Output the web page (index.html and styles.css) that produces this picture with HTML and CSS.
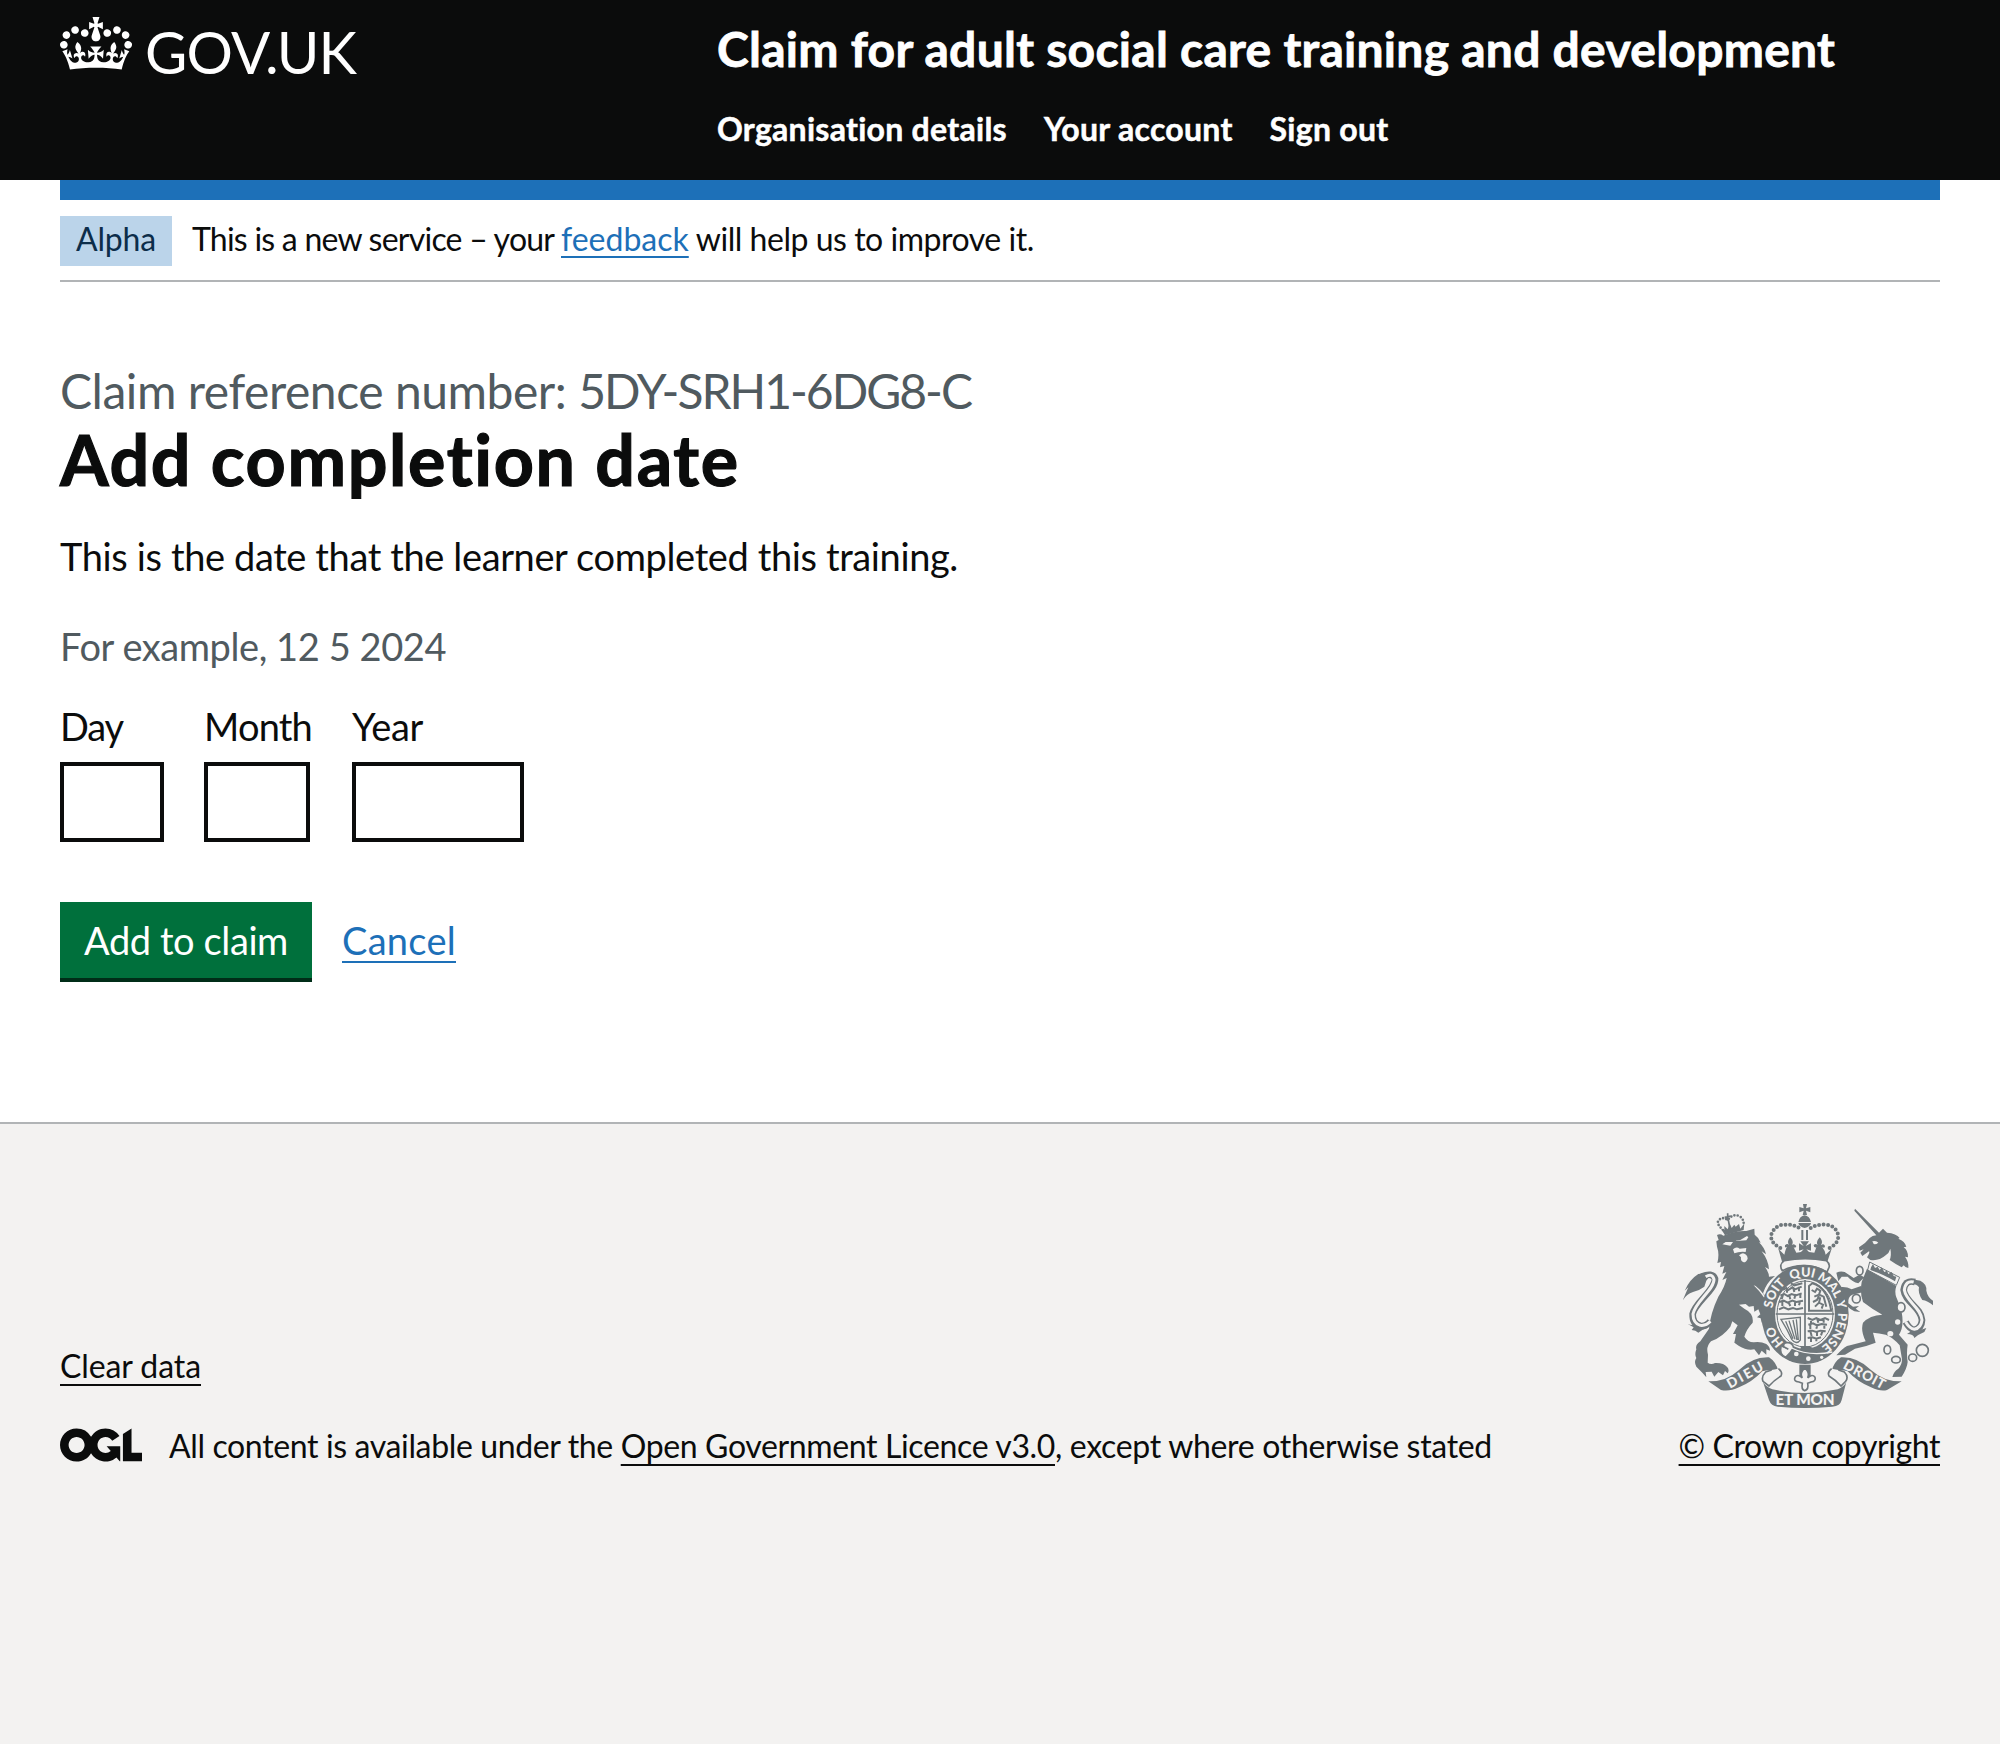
FILE: index.html
```html
<!DOCTYPE html>
<html lang="en">
<head>
<meta charset="utf-8">
<title>Add completion date</title>
<link rel="stylesheet" href="styles.css">
</head>
<body>
<header class="header">
  <div class="header-inner">
    <a class="logo" href="#">
      <svg class="crown" viewBox="0 0 132 97" aria-hidden="true"><path fill="currentColor" fill-rule="evenodd" d="M25 30.2c3.5 1.5 7.7-.2 9.1-3.7 1.5-3.6-.2-7.8-3.9-9.2-3.6-1.4-7.6.3-9.1 3.9-1.4 3.5.3 7.5 3.9 9zM9 39.5c3.6 1.5 7.8-.2 9.2-3.7 1.5-3.6-.2-7.8-3.9-9.1-3.6-1.5-7.6.2-9.1 3.8-1.4 3.5.3 7.5 3.8 9zM4.4 57.2c3.5 1.5 7.7-.2 9.1-3.8 1.5-3.6-.2-7.7-3.9-9.1-3.5-1.5-7.6.3-9.1 3.8-1.4 3.5.3 7.6 3.9 9.1zm38.3-21.4c3.5 1.5 7.7-.2 9.1-3.8 1.5-3.6-.2-7.7-3.9-9.1-3.6-1.5-7.6.3-9.1 3.8-1.3 3.6.4 7.7 3.9 9.1zm64.4-5.6c-3.6 1.5-7.8-.2-9.1-3.7-1.5-3.6.2-7.8 3.8-9.2 3.6-1.4 7.7.3 9.2 3.9 1.3 3.5-.4 7.5-3.9 9zm15.9 9.3c-3.6 1.5-7.7-.2-9.1-3.7-1.5-3.6.2-7.8 3.7-9.1 3.6-1.5 7.7.2 9.2 3.8 1.5 3.5-.3 7.5-3.8 9zm4.7 17.7c-3.6 1.5-7.8-.2-9.2-3.8-1.5-3.6.2-7.7 3.9-9.1 3.6-1.5 7.7.3 9.2 3.8 1.3 3.5-.4 7.6-3.9 9.1zM89.3 35.8c-3.6 1.5-7.8-.2-9.2-3.8-1.4-3.6.2-7.7 3.9-9.1 3.6-1.5 7.7.3 9.2 3.8 1.4 3.6-.3 7.7-3.9 9.1zM69.7 17.7l8.9 4.7V9.3l-8.9 2.8c-.2-.3-.5-.6-.9-.9L72.4 0H59.6l3.5 11.2c-.3.3-.6.5-.9.9l-8.8-2.8v13.1l8.8-4.7c.3.3.6.7.9.9l-5 15.4v.1c-.2.8-.4 1.6-.4 2.4 0 4.1 3.1 7.5 7 8.1h.2c.3 0 .7.1 1 .1.4 0 .7 0 1-.1h.2c4-.6 7.1-4.1 7.1-8.1 0-.8-.1-1.7-.4-2.4V34l-5.1-15.4c.4-.2.7-.6 1-.9zM66 92.8c16.9 0 32.8 1.1 47.1 3.2 4-16.9 8.9-26.7 14-33.5l-9.6-3.4c1 4.9 1.1 7.2 0 10.2-1.5-1.4-3-4.3-4.2-8.7L108.6 76c2.8-2 5-3.2 7.5-3.3-4.4 9.4-10 11.9-13.6 11.2-4.3-.8-6.3-4.6-5.6-7.9 1-4.7 5.7-5.9 8-.5 4.3-8.7-3-11.4-7.6-8.8 7.1-7.2 7.9-13.5 2.1-21.1-8 6.1-8.1 12.3-4.5 20.8-4.7-5.4-12.1-2.5-9.5 6.2 3.4-5.2 7.9-2 7.2 3.1-.6 4.3-6.4 7.8-13.5 7.2-10.3-.9-10.9-8-11.2-13.8 2.5-.5 7.1 1.8 11 7.3L80.2 60c-4.1 4.4-8 5.3-12.3 5.4 1.4-4.4 8-11.6 8-11.6H55.5s6.4 7.2 7.9 11.6c-4.2-.1-8-1-12.3-5.4l1.4 16.4c3.9-5.5 8.5-7.7 10.9-7.3-.3 5.8-.9 12.8-11.1 13.8-7.2.6-12.9-2.9-13.5-7.2-.7-5 3.8-8.3 7.1-3.1 2.7-8.7-4.6-11.6-9.4-6.2 3.7-8.5 3.6-14.7-4.6-20.8-5.8 7.6-5 13.9 2.2 21.1-4.7-2.6-11.9.1-7.7 8.8 2.3-5.5 7.1-4.2 8.1.5.7 3.3-1.3 7.1-5.7 7.9-3.5.7-9-1.8-13.5-11.2 2.5.1 4.7 1.3 7.5 3.3l-4.7-15.4c-1.2 4.4-2.7 7.2-4.3 8.7-1.1-3-.9-5.3 0-10.2l-9.5 3.4c5 6.9 9.9 16.7 14 33.5 14.8-2.1 30.8-3.2 47.7-3.2z"/></svg>
      <span class="logo-text">GOV.UK</span>
    </a>
    <div class="header-content">
      <a class="service-name" href="#">Claim for adult social care training and development</a>
      <nav class="nav">
        <a href="#">Organisation details</a>
        <a href="#">Your account</a>
        <a href="#">Sign out</a>
      </nav>
    </div>
  </div>
</header>
<div class="container">
  <div class="blue-bar"></div>
  <div class="phase">
    <strong class="tag">Alpha</strong>
    <span class="phase-text"><span class="phase-start">This is a new service – your </span><a class="link feedback" href="#">feedback</a><span class="phase-end"> will help us to improve it.</span></span>
  </div>
  <main class="main">
    <span class="caption"><span class="caption-label">Claim reference number: </span><span class="caption-code">5DY-SRH1-6DG8-C</span></span>
    <h1 class="heading">Add completion date</h1>
    <p class="body">This is the date that the learner completed this training.</p>
    <div class="hint">For example, 12 5 2024</div>
    <div class="date">
      <label class="field"><span class="label label-day">Day</span><input class="input input-2" type="text"></label>
      <label class="field field-month"><span class="label label-month">Month</span><input class="input input-month" type="text"></label>
      <label class="field"><span class="label label-year">Year</span><input class="input input-4" type="text"></label>
    </div>
    <div class="actions">
      <button class="button" type="button">Add to claim</button>
      <a class="link cancel" href="#">Cancel</a>
    </div>
  </main>
</div>
<footer class="footer">
  <div class="footer-inner">
    <div class="footer-meta">
      <div class="footer-links"><a class="footer-link" href="#">Clear data</a></div>
      <div class="licence">
        <svg class="ogl" viewBox="0 0 483.2 195.7" aria-hidden="true"><path fill="currentColor" d="M421.5 142.8V.1l-50.7 32.3v161.1h112.4v-50.7zm-122.3-9.6A47.12 47.12 0 0 1 221 97.8c0-26 21.1-47.1 47.1-47.1 16.7 0 31.4 8.7 39.7 21.8l42.7-27.2A97.63 97.63 0 0 0 268.1 0c-36.5 0-68.3 20.1-85.1 49.7A98 98 0 0 0 97.8 0C43.9 0 0 43.9 0 97.8s43.9 97.8 97.8 97.8c36.5 0 68.3-20.1 85.1-49.7a97.76 97.76 0 0 0 149.6 25.4l19.4 22.2h3v-87.8h-80l24.3 27.5zM97.8 145c-26 0-47.1-21.1-47.1-47.1s21.1-47.1 47.1-47.1 47.1 21.1 47.1 47.1S123.8 145 97.8 145"/></svg>
        <span class="licence-text">All content is available under the <a class="footer-link" href="#">Open Government Licence v3.0</a><span class="licence-end">, except where otherwise stated</span></span>
      </div>
    </div>
    <a class="copyright" href="#">
      <svg class="crest" viewBox="72 72 750 612" aria-hidden="true">
        <defs><path id="garter" d="M438 514A99 112 0 0 1 438 290A99 112 0 0 1 438 514" pathLength="100"/></defs>
        <!-- lion -->
        <g class="ink">
          <path d="M174 200L172 184L179 180L174 165Q184 160 193 167Q225 152 262 153L286 146L287 164Q299 172 305 188L300 187Q318 205 321 223L308 214Q328 240 330 268L318 261Q330 278 330 290L348 288Q322 308 312 340L340 368Q338 388 346 405L344 428L334 418L326 430L318 420L308 428L305 415L294 412L304 403L298 388L286 395L284 378L270 380L260 372L240 374L256 386Q285 400 281 428Q262 448 256 470Q268 488 285 487Q305 484 322 492Q333 500 333 512L322 508L322 524L308 512L300 526L286 508Q262 512 240 498L226 488L231 462L222 462L236 436L220 424L214 440Q192 470 156 484Q140 500 147 524L146 548Q156 556 168 549Q195 548 205 562Q212 570 206 580L198 573L192 586L178 576L166 590L158 575L140 576L142 592L130 578L112 560Q104 545 112 534Q106 524 112 508Q108 494 124 484L150 446Q154 400 178 350Q198 320 203 294L190 300L202 276L190 281L196 258L183 262L186 246L175 249Q182 222 174 200Z"/>
          <path d="M71 362Q80 340 88 322L77 332Q92 298 118 282L148 278Q154 292 142 302L136 320Q120 332 102 336Q82 342 71 362ZM86 432Q106 440 120 426Q136 436 152 426L146 444Q130 448 118 458Q110 450 98 450L104 442Z"/>
        </g>
        <path class="tube" d="M128 290Q160 276 168 296C170 330 108 366 101 402Q100 432 124 438Q142 440 154 424"/>
        <path class="tube-in" d="M140 290Q160 278 165 298C166 328 108 366 102 402Q102 430 124 436Q142 438 154 424"/>
        <g class="paper">
          <path d="M190 193L200 186L222 186L214 197ZM232 183L262 181L268 172L264 168L244 180L230 182ZM222 208Q232 198 242 206L262 204L260 216Q240 214 226 220ZM240 226Q248 220 252 220Q266 224 266 236Q262 247 254 247Q244 244 246 232Z"/>
          <path d="M284 316L290 318Q320 340 346 400L342 402Q318 348 284 316Z"/>
        </g>
        <!-- lion's crown -->
        <path class="ink" d="M186 146L198 166L254 150L256 130L244 146L240 132L230 140L226 134L218 144L212 130L206 148L196 138L196 150Z"/>
        <path class="dots small" d="M192 150Q172 132 178 122Q190 108 206 120Q222 100 240 108Q256 116 254 138"/>
        <path class="line" d="M206 100V122M197 112L215 108M208 120L212 142"/>
        <!-- central crown -->
        <g class="ink">
          <path d="M432 72H444L441 85L454 81V97L441 92L444 105H431L434 92L421 97V81L434 85ZM418 126Q422 108 437 106Q452 108 456 126ZM418 129H456Q454 140 437 144Q420 140 418 129Z"/>
          <path d="M358 206L376 224Q380 206 384 200Q376 206 378 196Q386 188 390 196Q382 184 394 172Q406 186 398 196Q404 188 412 198Q410 206 404 202L412 218L426 216L434 208L420 212V190L434 198L424 184H450L440 198L456 190V212L442 208L450 216L466 218L472 202Q464 204 464 196Q470 188 476 196Q470 186 482 172Q494 184 486 196Q494 188 498 198Q498 206 490 202Q498 212 500 224L518 206L504 248Q438 232 370 248Z"/>
          <path d="M427 150H433V180H427ZM441 150H447V180H441Z"/>
        </g>
        <path class="dots" d="M364 204Q330 186 338 160Q350 134 378 134Q404 132 428 148M512 204Q544 186 536 160Q526 134 496 134Q472 132 448 148"/>
        <path class="frame" d="M376 242Q438 230 502 242Q514 252 510 262L504 276Q438 240 370 272Q358 254 376 242Z"/>
        <!-- garter and shield -->
        <ellipse class="ink" cx="438" cy="403" rx="131" ry="149"/>
        <ellipse class="paper" cx="438" cy="402" rx="90" ry="105"/>
        <ellipse class="line thin" cx="438" cy="402" rx="84" ry="99"/>
        <path class="line" d="M438 300V505M350 402H526"/>
        <g class="charges">
          <path d="M372 330l10-6 6 6 12-8 8 6 20-8M384 326v12M402 322l4 14M420 320v14M364 346l12-4 10 6 12-6 12 4 18-6M372 344l-4 14M390 344l4 14M410 342l-4 14M424 342v12M360 366l14-4 12 6 14-6 12 4 20-4M370 364v14M388 366l6 12M408 362v16M424 362l-4 14M360 388l14-6 14 6 14-4 12 4 18-4M396 310l10 6 24-6"/>
          <path d="M446 414l14 6 12-6 12 6 14-6 12 6M456 416v14M474 414l4 14M494 416v12M448 434l14-4 12 6 14-4 16 2M454 434v14M476 432l-4 14M496 434v12M446 454l14-2 12 4 12-4 16 2M454 454l4 14M474 456v12M490 454l-4 12M446 474l14-2 12 4 14-4M456 474v12M472 474v10"/>
          <path d="M450 318L460 310Q504 322 516 388V392H450Z"/>
          <path d="M458 330L468 336L474 326L484 332L480 344L494 350L502 380M466 350L480 344M462 366L474 360L480 348M468 380L480 368L492 374L488 386M484 352L480 368"/>
          <path class="harp" d="M366 418L424 412V480Q412 496 398 478Q386 450 366 418ZM380 424L402 476M390 422L408 478M402 420L414 480M412 418L418 480"/>
        </g>
        <path class="ink" d="M426 498H450L466 506 444 514 424 512Z"/>
        <g class="motto garter-text">
          <text><textPath href="#garter" startOffset="10.5">HO</textPath></text>
          <text><textPath href="#garter" startOffset="27.5">SOIT</textPath></text>
          <text><textPath href="#garter" startOffset="43.5">QUI</textPath></text>
          <text><textPath href="#garter" startOffset="55.5">MAL</textPath></text>
          <text><textPath href="#garter" startOffset="69">Y</textPath></text>
          <text><textPath href="#garter" startOffset="74.5">PENSE</textPath></text>
        </g>
        <path class="frame" d="M366 500Q360 524 380 532Q394 520 404 502Q398 486 384 488Q372 488 374 500L388 508"/>
        <path class="gap" d="M398 504Q450 530 520 516"/>
        <circle class="paper" cx="412" cy="522" r="7"/><circle class="paper" cx="448" cy="536" r="7"/><circle class="paper" cx="488" cy="532" r="5"/>
        <!-- unicorn -->
        <g class="ink">
          <path d="M588 86L660 158L672 146L684 158Q712 160 722 174L718 176Q738 184 742 200L734 202Q748 212 747 232L738 230Q750 246 748 264Q738 262 734 256L728 262Q712 254 692 240Q698 226 694 206Q690 220 680 226Q660 244 634 240L624 232Q634 216 630 214L610 228L604 218L614 208L602 212L600 202Q620 190 632 174Q640 166 652 166L586 92Z"/>
          <path d="M624 266Q660 288 712 318Q706 336 712 352Q722 374 728 396Q736 440 720 464L746 494Q742 520 746 546Q744 566 728 590L700 591Q704 574 718 566Q732 550 728 532L722 496Q700 470 680 464Q660 460 642 458L650 488Q620 500 588 506L558 524L532 526Q550 506 564 498Q590 492 620 484Q604 452 612 428Q632 406 670 404Q640 388 612 366Q602 340 608 306Z"/>
          <path d="M532 278Q552 270 566 282L584 294L602 284L616 292L598 310Q580 306 566 290L548 290L538 304ZM540 322Q560 318 578 328L606 318L614 336L580 344Q566 350 568 370L582 380L600 378L590 386L604 396L586 394Q562 382 558 362L552 348Z"/>
          <path d="M734 302Q760 296 784 302Q804 312 802 332Q806 352 822 362V376Q806 362 790 360Q776 340 780 322Q768 306 740 316ZM760 448Q780 454 802 444L796 456Q780 462 766 474Q764 462 744 462Q756 456 760 448Z"/>
        </g>
        <path class="tube" d="M768 306Q738 298 734 330C738 366 786 382 789 420Q788 446 766 450Q752 448 740 426"/>
        <path class="tube-in" d="M764 306Q740 300 736 330C742 366 786 382 789 420Q786 444 766 448Q752 446 740 426"/>
        <path class="collar" d="M632 246L722 292L712 316L626 270Z"/>
        <path class="ink" d="M636 262L642 252L648 264L656 260L662 270L668 262L676 276L684 272L688 282L698 276L704 288L712 290L708 304Q680 286 634 270Z"/>
        <path class="paper" d="M640 184Q652 180 658 188Q650 194 644 192Z"/>
        <g class="chain">
          <ellipse cx="602" cy="272" rx="10" ry="13"/><ellipse cx="592" cy="356" rx="12" ry="13"/><ellipse cx="726" cy="382" rx="12" ry="14"/>
          <ellipse cx="685" cy="509" rx="10" ry="13"/><ellipse cx="711" cy="539" rx="13" ry="10"/><ellipse cx="761" cy="533" rx="12" ry="11"/><circle cx="790" cy="511" r="18"/>
        </g>
        <circle class="paper" cx="716" cy="426" r="8"/><ellipse class="paper" cx="694" cy="461" rx="9" ry="8"/>
        <!-- motto ribbon -->
        <g class="ink">
          <path d="M148 604Q200 606 240 570Q280 530 330 532Q352 546 358 574L340 572Q330 568 310 574Q280 606 240 622Q210 636 186 630Z"/>
          <path d="M728 604Q676 606 636 570Q596 530 546 532Q524 546 518 574L536 572Q546 568 566 574Q596 606 636 622Q666 636 684 630Z"/>
          <path d="M312 606Q322 622 340 628Q438 650 536 628Q554 622 562 606L548 660Q544 678 520 680Q438 688 356 680Q336 678 330 660Z"/>
          <path d="M421 554H455V590H421Z"/>
        </g>
        <path class="frame" d="M358 566Q372 576 366 588Q346 600 330 618L312 604Q306 590 320 576L338 570M518 566Q504 576 510 588Q530 600 546 618L560 604Q570 590 556 576L538 570"/>
        <path class="frame" d="M438 564Q454 580 446 594Q460 580 468 592Q472 604 456 606L446 610Q450 628 437 632Q426 628 430 610L420 606Q402 604 408 592Q416 580 430 594Q420 580 438 564Z"/>
        <g class="motto">
          <text transform="translate(213 626) rotate(-29)" textLength="118">DIEU</text>
          <text class="motto-main" x="438" y="676" text-anchor="middle">ET MON</text>
          <text transform="translate(550 564) rotate(28)" textLength="136">DROIT</text>
        </g>
      </svg>
      <span class="footer-link copyright-text">© Crown copyright</span>
    </a>
  </div>
</footer>
</body>
</html>
```
FILE: styles.css
```css
* { box-sizing: border-box; }
body { margin: 0; background: #f3f2f1; color: #0b0c0c; font-family: Lato, "Noto Sans", sans-serif; font-size: 32px; line-height: 40px; }
a { color: inherit; text-decoration: none; }

.header { height: 180px; background: #0b0c0c; color: #fff; }
.header-inner { display: grid; grid-template-columns: 657px 1fr; margin: 0 60px; padding-top: 17px; }
.logo { display: flex; align-items: flex-start; gap: 13px; }
.crown { width: 72px; height: 53px; }
.logo-text { font-size: 58px; line-height: 69px; letter-spacing: -0.88px; white-space: nowrap; }
.service-name { display: block; padding-top: 2px; font-size: 48px; line-height: 60px; font-weight: 700; letter-spacing: 0.27px; -webkit-text-stroke: 0.8px currentColor; white-space: nowrap; }
.nav { display: flex; gap: 37px; margin-top: 30px; font-size: 32px; line-height: 40px; font-weight: 700; letter-spacing: 0.28px; -webkit-text-stroke: 0.5px currentColor; white-space: nowrap; }

.container { padding: 0 60px; background: #fff; }
.blue-bar { height: 20px; background: #1d70b8; }
.phase { display: flex; gap: 20px; height: 82px; padding-top: 16px; border-bottom: 2px solid #b1b4b6; white-space: nowrap; }
.phase-text { white-space: pre; padding-top: 3px; }
.phase-start { letter-spacing: -0.763px; }
.phase-end { letter-spacing: -0.471px; }
.tag { width: 112px; height: 50px; padding: 3px 16px; background: #bbd4ea; color: #0c2d4a; font-weight: 400; letter-spacing: -0.17px; }
.link { color: #1d70b8; text-decoration: underline; text-decoration-thickness: 2px; text-underline-offset: 5px; text-decoration-skip-ink: none; }

.main { height: 840px; padding-top: 79px; white-space: nowrap; }
.caption { display: block; font-size: 48px; line-height: 60px; color: #505a5f; white-space: pre; }
.caption-label { letter-spacing: -0.46px; }
.caption-code { letter-spacing: -2px; }
.heading { margin: 0; font-size: 70px; line-height: 76px; font-weight: 700; letter-spacing: 1.62px; -webkit-text-stroke: 1.2px currentColor; }
.body { margin: 34px 0 40px; font-size: 38px; line-height: 50px; letter-spacing: -0.379px; }
.hint { color: #505a5f; font-size: 38px; line-height: 50px; letter-spacing: -0.43px; }
.date { display: flex; gap: 40px; margin-top: 30px; }
.field { display: flex; flex-direction: column; gap: 11px; }
.field-month { width: 108px; }
.label { font-size: 38px; line-height: 50px; }
.label-day { letter-spacing: -1.146px; }
.label-month { letter-spacing: -0.803px; }
.label-year { letter-spacing: -0.336px; }
.input { height: 80px; margin: 0; padding: 10px; border: 4px solid #0b0c0c; border-radius: 0; background: #fff; }
.input-2 { width: 104px; }
.input-month { width: 106px; }
.input-4 { width: 172px; }
.actions { display: flex; align-items: flex-start; gap: 30px; margin-top: 60px; font-size: 38px; }
.button { width: 252px; height: 76px; margin: 0; padding: 0; border: 0; background: #00703c; color: #fff; box-shadow: 0 4px 0 #002d18; font: inherit; line-height: 76px; letter-spacing: -0.4px; }
.cancel { line-height: 76px; letter-spacing: 0.28px; text-underline-offset: 6px; }

.footer { height: 622px; border-top: 2px solid #b1b4b6; background: #f3f2f1; }
.footer-inner { display: flex; justify-content: space-between; align-items: flex-end; height: 342px; margin: 0 60px; white-space: nowrap; }
.footer-links { margin-bottom: 40px; letter-spacing: -0.09px; }
.licence { display: flex; gap: 27px; }
.ogl { width: 82px; height: 34px; margin-top: 2px; }
.licence-text { white-space: pre; letter-spacing: -0.362px; }
.licence-end { letter-spacing: -0.313px; }
.footer-link { text-decoration: underline; text-decoration-thickness: 2px; text-underline-offset: 6px; text-decoration-skip-ink: none; }
.copyright { display: flex; flex-direction: column; align-items: center; gap: 18px; }
.copyright-text { letter-spacing: -0.41px; }
.crest { width: 250px; height: 204px; margin-right: 2px; }

.ink { fill: #6f777b; }
.paper { fill: #f3f2f1; }
.tube { fill: none; stroke: #6f777b; stroke-width: 20; }
.tube-in { fill: none; stroke: #f3f2f1; stroke-width: 9; }
.line { fill: none; stroke: #6f777b; stroke-width: 5; }
.thin { stroke-width: 3; }
.frame { fill: #f3f2f1; stroke: #6f777b; stroke-width: 5; }
.gap { fill: none; stroke: #f3f2f1; stroke-width: 4; }
.dots { fill: none; stroke: #6f777b; stroke-width: 12; stroke-linecap: round; stroke-dasharray: 0 13.5; }
.small { stroke-width: 8; stroke-dasharray: 0 10; }
.charges { fill: none; stroke: #6f777b; stroke-width: 6; }
.harp { stroke-width: 4; }
.collar { fill: #f3f2f1; stroke: #6f777b; stroke-width: 3; }
.chain { fill: #f3f2f1; stroke: #6f777b; stroke-width: 5; }
.motto { fill: #f3f2f1; font-family: Lato, sans-serif; font-weight: 900; font-size: 41px; }
.garter-text { font-size: 38px; }
.motto-main { font-size: 46px; letter-spacing: -0.5px; }
```
